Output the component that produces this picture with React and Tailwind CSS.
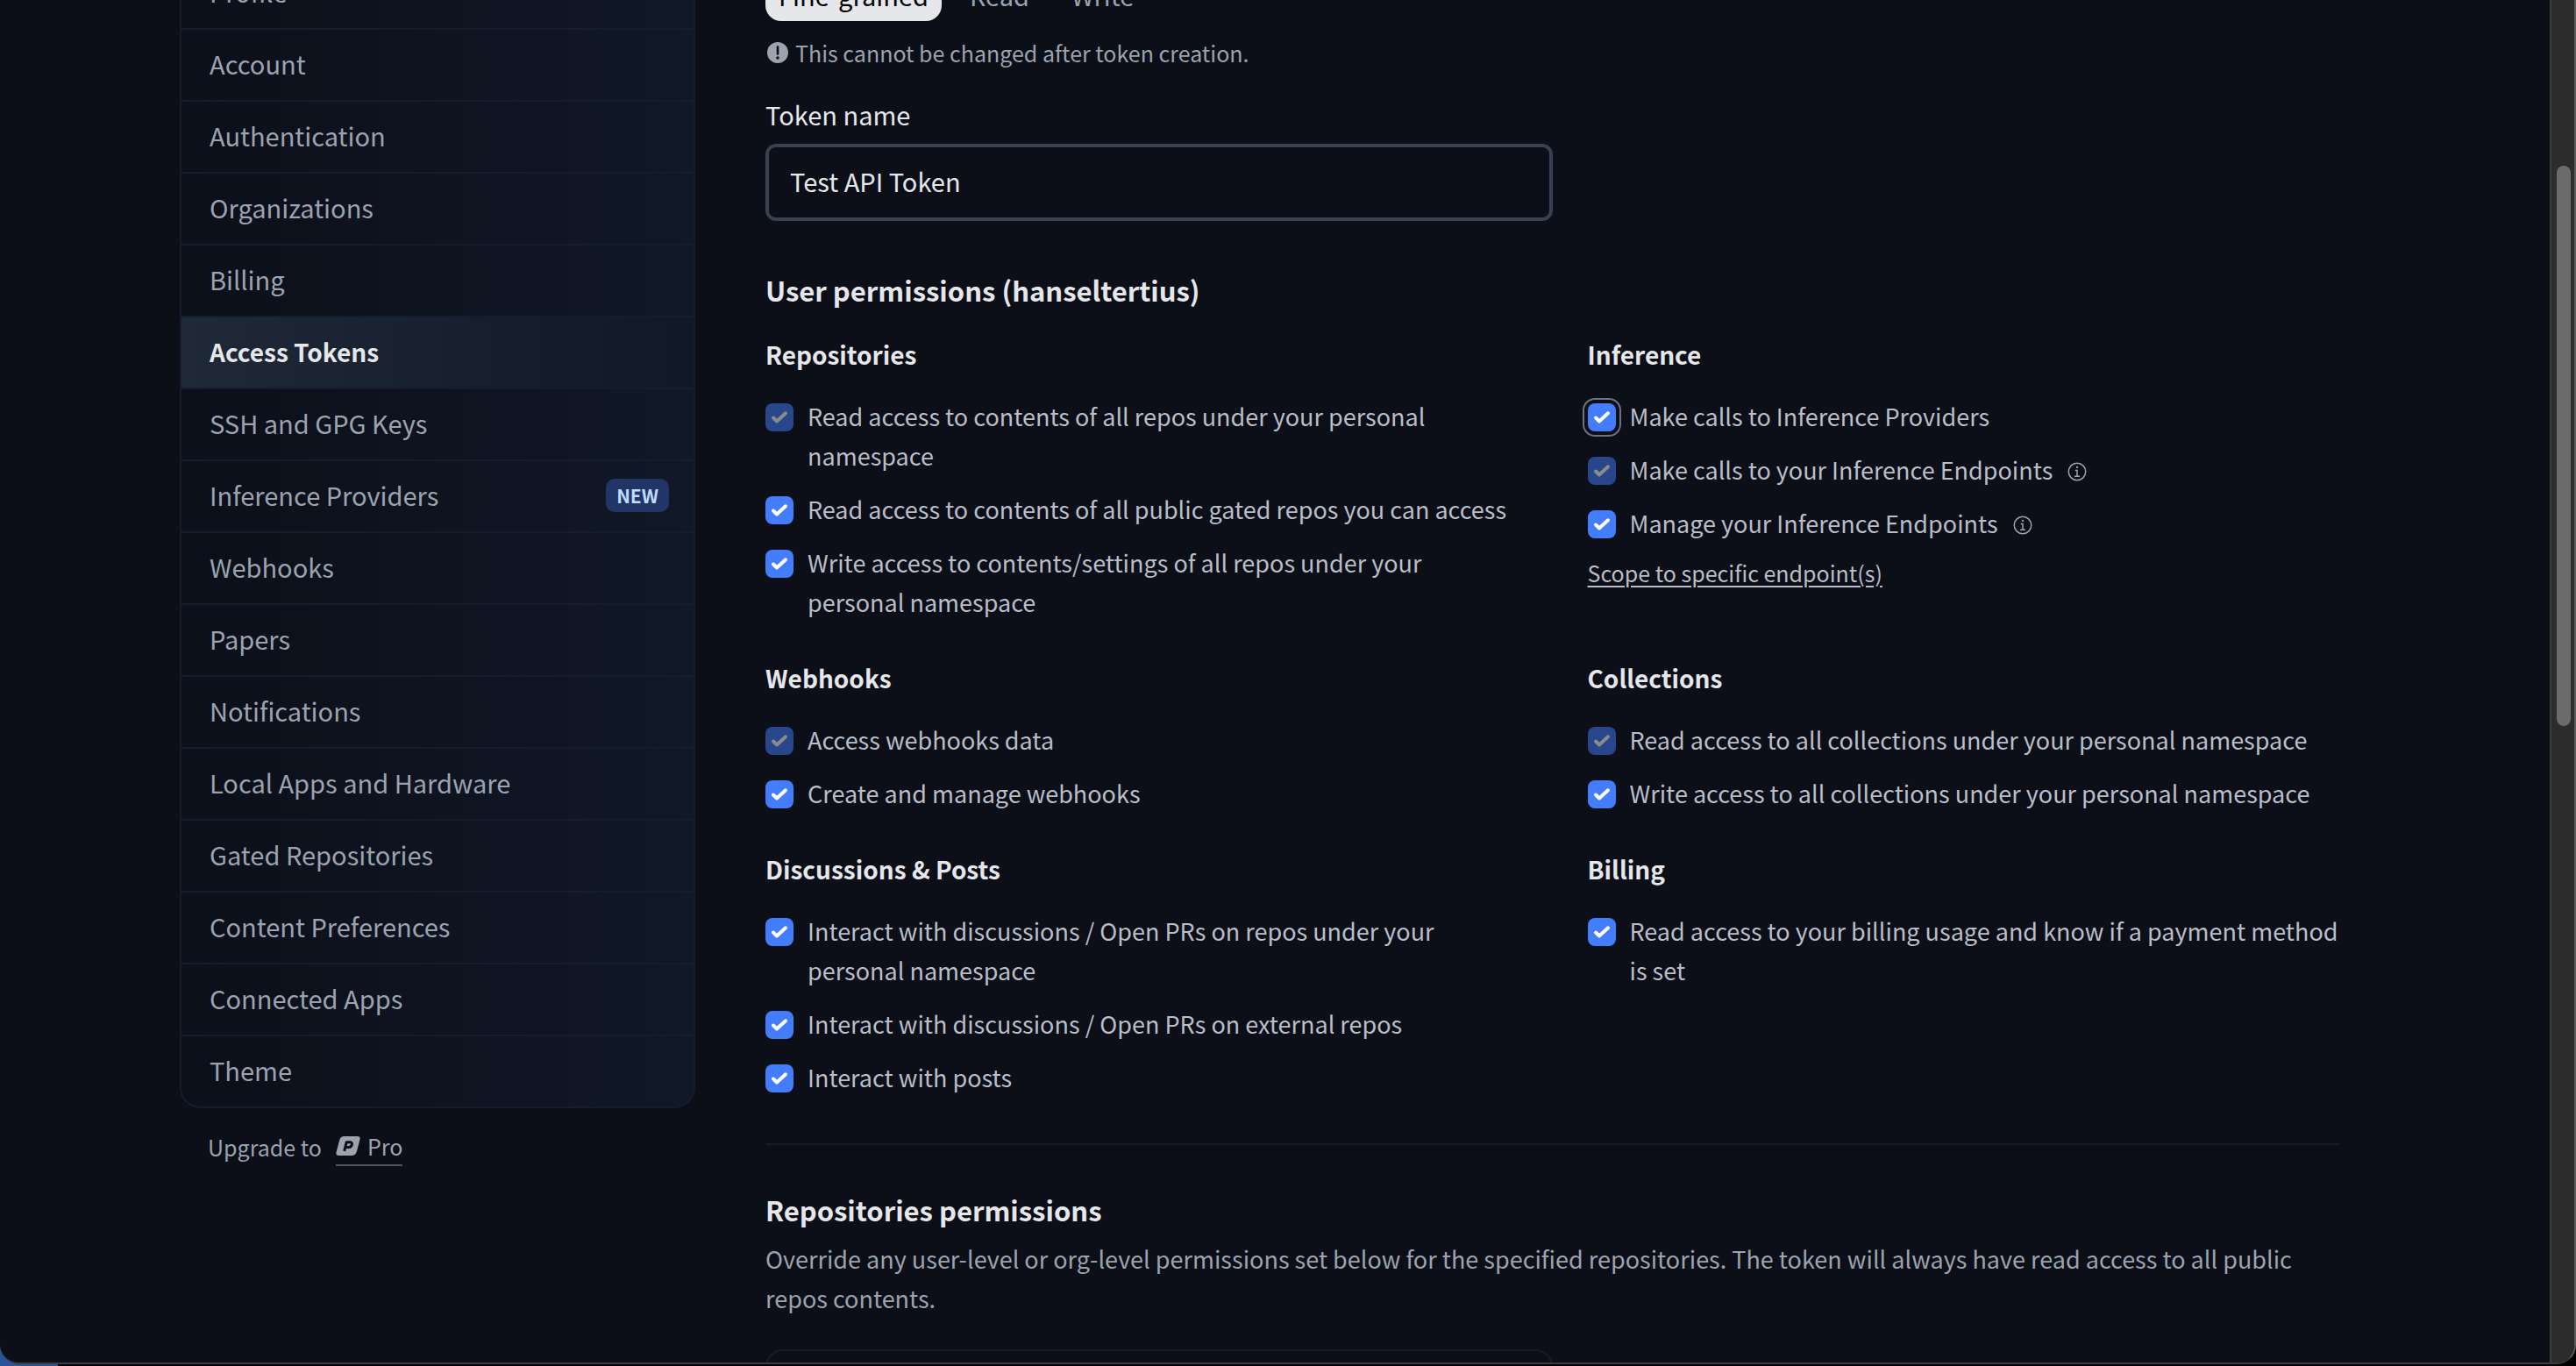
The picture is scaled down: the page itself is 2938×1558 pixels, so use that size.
import React from "react";

const NAV = [
  "Profile", "Account", "Authentication", "Organizations", "Billing", "Access Tokens",
  "SSH and GPG Keys", "Inference Providers", "Webhooks", "Papers", "Notifications",
  "Local Apps and Hardware", "Gated Repositories", "Content Preferences", "Connected Apps", "Theme",
];

const SECTIONS = [
  { title: "Repositories", items: [
    { label: "Read access to contents of all repos under your personal namespace", disabled: true },
    { label: "Read access to contents of all public gated repos you can access" },
    { label: "Write access to contents/settings of all repos under your personal namespace" },
  ] },
  { title: "Inference", link: "Scope to specific endpoint(s)", items: [
    { label: "Make calls to Inference Providers", focused: true },
    { label: "Make calls to your Inference Endpoints", disabled: true, info: true },
    { label: "Manage your Inference Endpoints", info: true },
  ] },
  { title: "Webhooks", items: [
    { label: "Access webhooks data", disabled: true },
    { label: "Create and manage webhooks" },
  ] },
  { title: "Collections", items: [
    { label: "Read access to all collections under your personal namespace", disabled: true },
    { label: "Write access to all collections under your personal namespace" },
  ] },
  { title: "Discussions & Posts", items: [
    { label: "Interact with discussions / Open PRs on repos under your personal namespace" },
    { label: "Interact with discussions / Open PRs on external repos" },
    { label: "Interact with posts" },
  ] },
  { title: "Billing", items: [
    { label: "Read access to your billing usage and know if a payment method is set" },
  ] },
];

function CheckMark() {
  return (
    <svg viewBox="0 0 32 32" className="pointer-events-none col-start-1 row-start-1 size-8 fill-none stroke-white stroke-[4] peer-disabled:stroke-[#8b8b8b]">
      <path d="M9 16.5 L13 20.5 L23 11.3" strokeLinecap="round" strokeLinejoin="round" />
    </svg>
  );
}

function InfoIcon() {
  return (
    <svg viewBox="0 0 32 32" className="ml-4 inline size-6 align-[-3px]" fill="#9ca3af">
      <path d="M17 22v-9h-4v2h2v7h-3v2h8v-2zM16 7.5a1.6 1.6 0 1 0 0 3.2 1.6 1.6 0 0 0 0-3.2z" />
      <path d="M16 30a14 14 0 1 1 14-14 14 14 0 0 1-14 14zm0-26a12 12 0 1 0 12 12A12 12 0 0 0 16 4z" />
    </svg>
  );
}

function Permission({ item }) {
  return (
    <label className="flex items-start gap-4 text-[27px] leading-[45px] text-[#b9bec8]">
      <span className="mt-2 grid size-8 shrink-0">
        <input
          type="checkbox"
          defaultChecked
          disabled={item.disabled}
          className={
            "peer col-start-1 row-start-1 size-8 appearance-none rounded-lg bg-[#437dfc] disabled:bg-[#27468b]" +
            (item.focused ? " outline-2 outline-offset-4 outline-[#6b7280]" : "")
          }
        />
        <CheckMark />
      </span>
      <span>
        {item.label}
        {item.info && <InfoIcon />}
      </span>
    </label>
  );
}

function ProIcon() {
  return (
    <svg viewBox="0 0 28 22" className="h-[22px] w-7">
      <path fill="#9ca3af" d="M9.500 0H24.500Q28.300 0 27.500 3.500L24 17Q22.700 22 18 22H3.500Q-0.300 22 0.500 18.500L4 5Q5.200 0 9.500 0Z" />
      <path fill="none" stroke="#0c0f18" strokeWidth="3" strokeLinejoin="round" d="M9.700 16.800L12.200 6.700H16.500Q19 6.900 18.300 9.600Q17.600 12.300 15 12.500H12" />
    </svg>
  );
}

export default function App() {
  return (
    <div className="h-screen overflow-hidden bg-[linear-gradient(to_right,#27549a_66px,#000_66px)] font-['Noto_Sans_CJK_SC','Noto_Sans',sans-serif] text-[#e5e7eb]">
      <div className="flex h-full pb-0.5">
        <div className="flex min-w-0 flex-1 overflow-hidden rounded-b-[22px] border-r-2 border-b-2 border-r-[#5c5c5c] border-b-[#3b3b40] bg-[#0c0f18]">
          <div className="flex min-w-0 flex-1 items-start pr-60 pl-[205px]">
            <aside className="-mt-[50px] w-[588px] shrink-0">
              <nav className="overflow-hidden rounded-b-[24px] border-2 border-[#141c2e] bg-linear-to-r from-[#0b0f19] to-[#111827]">
                <ul className="divide-y-2 divide-[#151c2d]">
                  {NAV.map((name) => (
                    <li key={name}>
                      <a
                        href="#"
                        className={
                          "flex h-20 items-center justify-between pr-7 pb-0.5 pl-8 " +
                          (name === "Access Tokens"
                            ? "bg-linear-to-r from-[#1f2937] to-[#111827] text-[28px] font-bold text-[#e5e7eb]"
                            : "text-[29px] text-[#9ca3af]")
                        }
                      >
                        {name}
                        {name === "Inference Providers" && (
                          <span className="rounded-[10px] bg-[#213566] px-3 text-[21px] leading-[38px] font-bold text-[#bfdbfe]">NEW</span>
                        )}
                      </a>
                    </li>
                  ))}
                </ul>
              </nav>
              <p className="mt-[22px] flex items-center gap-4 pl-8 text-[25px] leading-[42px] text-[#9ca3af]">
                Upgrade to
                <a href="#" className="flex items-center gap-2 border-b-2 border-[#4b5563]">
                  <ProIcon />
                  Pro
                </a>
              </p>
            </aside>

            <main className="ml-20 min-w-0 flex-1">
              <div className="-mt-[34px] flex h-[58px] text-[29px]">
                <button type="button" className="rounded-[18px] bg-[#e5e7eb] px-[15px] text-black">Fine-grained</button>
                <button type="button" className="px-8 text-[#9ca3af]">Read</button>
                <button type="button" className="px-4 text-[#9ca3af]">Write</button>
              </div>
              <p className="mt-4 flex items-center gap-2 pl-0.5 text-[25px] leading-10 text-[#9ca3af]">
                <svg viewBox="0 0 24 24" className="size-6">
                  <circle cx="12" cy="12" r="12" fill="#9ca3af" />
                  <path d="M12 5.500v8" stroke="#0b0f17" strokeWidth="2.600" strokeLinecap="round" />
                  <circle cx="12" cy="18" r="1.700" fill="#0b0f17" />
                </svg>
                This cannot be changed after token creation.
              </p>

              <label htmlFor="token-name" className="mt-[26px] block text-[29px] leading-[48px]">Token name</label>
              <input
                id="token-name"
                type="text"
                defaultValue="Test API Token"
                className="mt-2.5 block h-[88px] w-[898px] rounded-xl border-4 border-[#374151] bg-transparent px-6 pb-1 text-[29px]"
              />

              <h2 className="mt-[54px] text-[31px] leading-[50px] font-bold">User permissions (hanseltertius)</h2>
              <div className="mt-6 grid grid-cols-2 gap-x-20 gap-y-10">
                {SECTIONS.map((s) => (
                  <section key={s.title}>
                    <h3 className="mb-6 text-[28px] leading-[48px] font-bold">{s.title}</h3>
                    <div className="flex flex-col gap-4">
                      {s.items.map((item) => (
                        <Permission key={item.label} item={item} />
                      ))}
                    </div>
                    {s.link && (
                      <a href="#" className="mt-3 inline-block text-[25px] leading-[44px] text-[#b9bec8] underline underline-offset-4">{s.link}</a>
                    )}
                  </section>
                ))}
              </div>

              <hr className="mt-[53px] border-t-2 border-[#161c30]" />
              <h2 className="mt-[49px] text-[31px] leading-[50px] font-bold">Repositories permissions</h2>
              <p className="mt-2 text-[27px] leading-[45px] text-[#9ca3af]">
                Override any user-level or org-level permissions set below for the specified repositories. The token will always have read access to all public repos contents.
              </p>
              <input
                type="search"
                aria-label="Search repositories"
                className="mt-9 block h-20 w-[898px] rounded-[20px] border-2 border-[#161c30] bg-transparent px-6 text-[29px]"
              />
            </main>
          </div>
          <div className="w-7 shrink-0 border-l-2 border-[#3d3d3d] bg-[#2c2c2c] pt-[189px] pl-1.5">
            <div className="h-[639px] w-4 rounded-full bg-[#6b6b6b]" />
          </div>
        </div>
      </div>
    </div>
  );
}
